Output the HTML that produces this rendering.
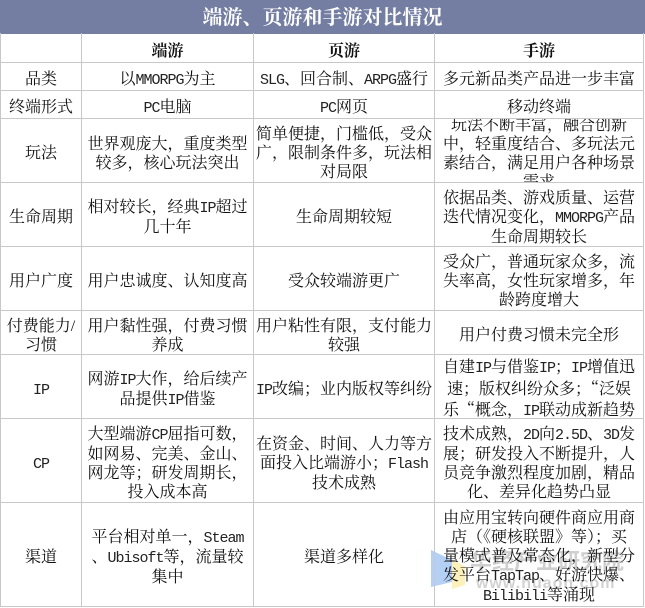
<!DOCTYPE html>
<html lang="zh-CN">
<head>
<meta charset="utf-8">
<title>端游、页游和手游对比情况</title>
<style>
html,body{margin:0;padding:0;background:#fff}
#w{position:relative;width:645px;height:608px;overflow:hidden;background:#fff;color:#111;font:16px/19px "Liberation Serif","Noto Serif CJK SC",serif}
#t{position:absolute;left:0;top:0;width:645px;height:33.5px;background:#747ea3;color:#fff;font-weight:bold;font-size:20px;line-height:37px;text-align:center;overflow:hidden}
.l{position:absolute;background:#c8c8c8}
.v{top:33px;width:1px;height:574px}
.h{left:0;width:644px;height:1px}
.c{position:absolute;display:flex;align-items:center;justify-content:center;overflow:hidden;text-align:center;white-space:nowrap}
.c p{margin:0;position:relative;top:3px}
.a{left:1px;width:80px}.b{left:82px;width:171px}.d{left:254px;width:180px}.e{left:435px;width:208px}
.r0{top:34px;height:28px}.r1{top:63px;height:27px}.r2{top:91px;height:27px}.r3{top:119px;height:63px}
.r4{top:183px;height:63px}.r5{top:247px;height:63px}.r6{top:311px;height:43px}.r7{top:355px;height:63px}
.r8{top:419px;height:83px}.r9{top:503px;height:103px}
.s{font-weight:bold}
i{font:normal 15px/19px "Liberation Mono",monospace;letter-spacing:-1px;color:#222}
b{font:inherit;font-family:"Noto Serif CJK SC",serif}
</style>
</head>
<body>
<div id="w">
<svg style="position:absolute;left:0;top:0" width="645" height="608">
<polygon points="431,550 452,560 452,582 431,587" fill="#b4d0f5"/>
<polygon points="452,560 465,566 465,585 452,589" fill="#fcf0bb"/>
<text x="470" y="569" font-family="Liberation Sans,Noto Sans CJK SC,sans-serif" font-size="22" font-weight="bold" fill="#cfcfcf">华经产业研究院</text>
<text x="476" y="588" font-family="Liberation Sans,sans-serif" font-size="16" font-weight="bold" fill="#d2d2d2" letter-spacing="1">www.huaon.com</text>
</svg>
<div id="t">端游、页游和手游对比情况</div>
<div class="l v" style="left:0"></div><div class="l v" style="left:81px"></div><div class="l v" style="left:253px"></div><div class="l v" style="left:434px"></div><div class="l v" style="left:643px"></div>
<div class="l h" style="top:62px"></div><div class="l h" style="top:90px"></div><div class="l h" style="top:118px"></div><div class="l h" style="top:182px"></div><div class="l h" style="top:246px"></div><div class="l h" style="top:310px"></div><div class="l h" style="top:354px"></div><div class="l h" style="top:418px"></div><div class="l h" style="top:502px"></div><div class="l h" style="top:606px"></div>

<div class="c b r0 s"><p>端游</p></div><div class="c d r0 s"><p>页游</p></div><div class="c e r0 s"><p>手游</p></div>

<div class="c a r1"><p>品类</p></div>
<div class="c b r1"><p>以<i>MMORPG</i>为主</p></div>
<div class="c d r1"><p><i>SLG</i>、回合制、<i>ARPG</i>盛行</p></div>
<div class="c e r1"><p>多元新品类产品进一步丰富</p></div>

<div class="c a r2"><p>终端形式</p></div>
<div class="c b r2"><p><i>PC</i>电脑</p></div>
<div class="c d r2"><p><i>PC</i>网页</p></div>
<div class="c e r2"><p>移动终端</p></div>

<div class="c a r3"><p>玩法</p></div>
<div class="c b r3"><p>世界观庞大，重度类型<br>较多，核心玩法突出</p></div>
<div class="c d r3"><p>简单便捷，门槛低，受众<br>广，限制条件多，玩法相<br>对局限</p></div>
<div class="c e r3"><p>玩法不断丰富，融合创新<br>中，轻重度结合、多玩法元<br>素结合，满足用户各种场景<br>需求</p></div>

<div class="c a r4"><p>生命周期</p></div>
<div class="c b r4"><p>相对较长，经典<i>IP</i>超过<br>几十年</p></div>
<div class="c d r4"><p>生命周期较短</p></div>
<div class="c e r4"><p>依据品类、游戏质量、运营<br>迭代情况变化，<i>MMORPG</i>产品<br>生命周期较长</p></div>

<div class="c a r5"><p>用户广度</p></div>
<div class="c b r5"><p>用户忠诚度、认知度高</p></div>
<div class="c d r5"><p>受众较端游更广</p></div>
<div class="c e r5"><p>受众广，普通玩家众多，流<br>失率高，女性玩家增多，年<br>龄跨度增大</p></div>

<div class="c a r6"><p>付费能力/<br>习惯</p></div>
<div class="c b r6"><p>用户黏性强，付费习惯<br>养成</p></div>
<div class="c d r6"><p>用户粘性有限，支付能力<br>较强</p></div>
<div class="c e r6"><p>用户付费习惯未完全形</p></div>

<div class="c a r7"><p><i>IP</i></p></div>
<div class="c b r7"><p>网游<i>IP</i>大作，给后续产<br>品提供<i>IP</i>借鉴</p></div>
<div class="c d r7"><p><i>IP</i>改编；业内版权等纠纷</p></div>
<div class="c e r7"><p>自建<i>IP</i>与借鉴<i>IP</i>；<i>IP</i>增值迅<br>速；版权纠纷众多；<b>“</b>泛娱<br>乐<b>“</b>概念，<i>IP</i>联动成新趋势</p></div>

<div class="c a r8"><p><i>CP</i></p></div>
<div class="c b r8"><p>大型端游<i>CP</i>屈指可数，<br>如网易、完美、金山、<br>网龙等；研发周期长，<br>投入成本高</p></div>
<div class="c d r8"><p>在资金、时间、人力等方<br>面投入比端游小；<i>Flash</i><br>技术成熟</p></div>
<div class="c e r8"><p>技术成熟，<i>2D</i>向<i>2.5D</i>、<i>3D</i>发<br>展；研发投入不断提升，人<br>员竞争激烈程度加剧，精品<br>化、差异化趋势凸显</p></div>

<div class="c a r9"><p>渠道</p></div>
<div class="c b r9"><p>平台相对单一，<i>Steam</i><br>、<i>Ubisoft</i>等，流量较<br>集中</p></div>
<div class="c d r9"><p>渠道多样化</p></div>
<div class="c e r9"><p>由应用宝转向硬件商应用商<br>店（《硬核联盟》等）；买<br>量模式普及常态化，新型分<br>发平台<i>TapTap</i>、好游快爆、<br><i>Bilibili</i>等涌现</p></div>
</div>
</body>
</html>
